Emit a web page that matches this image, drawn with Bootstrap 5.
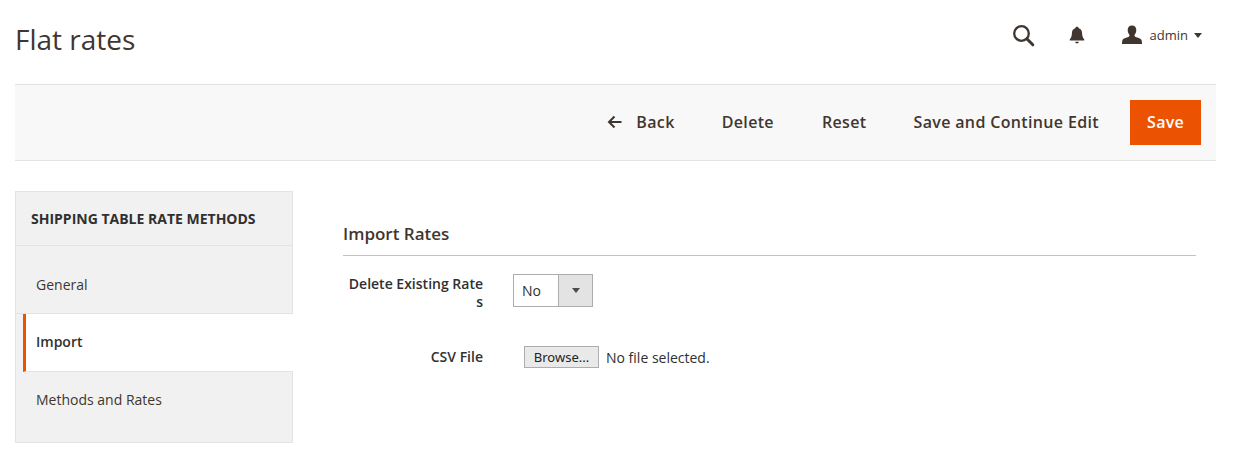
<!DOCTYPE html>
<html lang="en">
<head>
<meta charset="utf-8">
<title>Flat rates</title>
<link href="https://cdn.jsdelivr.net/npm/bootstrap@5.3.0/dist/css/bootstrap.min.css" rel="stylesheet">
<style>
html,body{height:459px;overflow:hidden}
body{font-family:"Open Sans",sans-serif;font-size:14px;color:#303030;background:#fff}
.pg-wrap{padding:0 22px 0 15px}
.pg-head{height:84px}
.pg-title{font-size:28px;font-weight:400;color:#41362f;line-height:36px;margin:0 0 6px}
.head-tools{padding-right:14px;padding-bottom:14px;color:#41362f}
.ico-search{margin-right:34px}
.ico-bell{margin-right:37px}
.admin-name{font-size:13px;color:#41362f;margin-left:8px;margin-right:6px;position:relative;top:1px}
.caret-down{width:0;height:0;border-left:4.5px solid transparent;border-right:4.5px solid transparent;border-top:5px solid #41362f}
.act-bar{height:77px;background:#f8f8f8;border-top:1px solid #e3e3e3;border-bottom:1px solid #e3e3e3;padding-right:15px}
.act-link{font-size:16px;font-weight:600;color:#41362f;background:none;border:0;padding:0 0 2px;letter-spacing:.35px;line-height:22px;margin-right:47px}
.act-link svg{margin-right:14px;vertical-align:-1px}
.act-delete{margin-right:48px}
.act-last{margin-right:31px}
.act-save{width:71px;height:45px;background:#eb5202;color:#fff;border:0;border-radius:0;font-size:16px;font-weight:600;letter-spacing:.25px;padding:0 0 2px}
.pg-body{padding-top:30px}
.side-col{width:278px;flex:none}
.side-title{height:55px;background:#f1f1f1;border:1px solid #e3e3e3;font-size:14px;font-weight:700;padding-left:15px;color:#303030}
.side-list{background:#f1f1f1;border:1px solid #e3e3e3;border-top:0;padding-top:11px;padding-bottom:14px;height:197px}
.side-item{height:57px;padding-left:20px;padding-bottom:2px;color:#41362f;font-size:14px}
.side-first{height:57px;border-bottom:1px solid #e3e3e3}
.side-on{height:58px;margin-left:7px;margin-right:-1px;padding-left:10px;background:#fff;border-left:3px solid #eb5202;border-bottom:1px solid #e3e3e3;font-weight:600;color:#303030}
.main-col{padding-left:50px;padding-right:20px}
.sec-title{font-size:17px;font-weight:600;color:#41362f;line-height:24px;margin:0;padding:31px 0 9px;border-bottom:1px solid #cac3b4}
.frm-row{display:flex}
.frm-lab{width:140px;flex:none;text-align:right;font-weight:600;font-size:14px;line-height:18px;color:#303030;word-break:break-all}
.row-one{padding-top:18px}
.row-one .frm-lab{padding-top:1px}
.fake-sel{margin-left:30px;width:80px;height:33px;border:1px solid #adadad;background:#fff;font-size:14px}
.fake-val{flex:1;padding-left:8px;line-height:31px;color:#303030}
.fake-arr{width:34px;background:#e3e3e3;border-left:1px solid #adadad}
.fake-arr i{display:block;width:0;height:0;border-left:4px solid transparent;border-right:4px solid transparent;border-top:5px solid #514943}
.row-two{padding-top:35px;align-items:center}
.file-btn{margin-left:41px;width:75px;height:22px;padding:0;background:#e9e9e9;border:1px solid #adadad;border-radius:0;font-family:"Noto Sans",sans-serif;font-size:13px;line-height:18px;color:#222}
.file-txt{margin-left:7px;font-size:14px;color:#303030}
</style>
</head>
<body>
<div class="pg-wrap">
  <header class="pg-head d-flex justify-content-between align-items-center">
    <h1 class="pg-title">Flat rates</h1>
    <div class="head-tools d-flex align-items-center">
      <svg class="ico-search" width="23" height="23" viewBox="0 0 23 23" aria-hidden="true"><circle cx="9.5" cy="9.5" r="7.3" fill="none" stroke="#41362f" stroke-width="2.3"/><path d="M14.8 14.8l6 6" stroke="#41362f" stroke-width="3" stroke-linecap="round"/></svg>
      <svg class="ico-bell" width="16" height="18" viewBox="0 0 16 18" aria-hidden="true"><path d="M8 .8c1 0 1.6.6 1.7 1.4 2.4.7 3.3 2.6 3.4 5 .1 2.6.5 4.3 2.1 6v1.3H.8v-1.3c1.6-1.7 2-3.4 2.1-6 .1-2.4 1-4.3 3.4-5C6.4 1.4 7 .8 8 .8z" fill="#41362f"/><path d="M6.2 15.8h3.6c0 1-.8 1.7-1.8 1.7s-1.8-.7-1.800-1.700z" fill="#41362f"/></svg>
      <svg width="20" height="20" viewBox="0 0 20 20" aria-hidden="true"><path d="M10 .5c2.800 0 4.300 1.900 4.300 4.600 0 1.900-.6 3.400-1.500 4.500-.4.500-.4 1.500.2 2 1.500 1.100 5.500 1.500 6.500 3.500.3.800.5 2.300.5 4H0c0-1.700.2-3.200.5-4 1-2 5-2.400 6.500-3.500.6-.5.600-1.500.2-2C6.300 8.500 5.700 7 5.700 5.100 5.700 2.400 7.200.5 10 .5z" fill="#41362f"/></svg>
      <span class="admin-name">admin</span>
      <span class="caret-down"></span>
    </div>
  </header>
  <div class="act-bar d-flex justify-content-end align-items-center">
    <button class="act-link" type="button"><svg width="15" height="14" viewBox="0 0 15 14" aria-hidden="true"><path d="M14.5 7H2M7.5 1.5L2 7l5.5 5.5" fill="none" stroke="#41362f" stroke-width="2"/></svg>Back</button>
    <button class="act-link act-delete" type="button">Delete</button>
    <button class="act-link" type="button">Reset</button>
    <button class="act-link act-last" type="button">Save and Continue Edit</button>
    <button class="btn act-save" type="button">Save</button>
  </div>
  <div class="pg-body d-flex">
    <aside class="side-col">
      <div class="side-title d-flex align-items-center">SHIPPING TABLE RATE METHODS</div>
      <div class="side-list">
        <div class="side-item side-first d-flex align-items-center"><span>General</span></div>
        <div class="side-item side-on d-flex align-items-center"><span>Import</span></div>
        <div class="side-item d-flex align-items-center"><span>Methods and Rates</span></div>
      </div>
    </aside>
    <main class="main-col flex-grow-1">
      <h2 class="sec-title">Import Rates</h2>
      <div class="frm-row row-one">
        <div class="frm-lab">Delete Existing Rates</div>
        <div class="fake-sel d-flex">
          <span class="fake-val">No</span>
          <span class="fake-arr d-flex align-items-center justify-content-center"><i></i></span>
        </div>
      </div>
      <div class="frm-row row-two">
        <div class="frm-lab">CSV File</div>
        <button class="file-btn" type="button">Browse...</button>
        <span class="file-txt">No file selected.</span>
      </div>
    </main>
  </div>
</div>
</body>
</html>
